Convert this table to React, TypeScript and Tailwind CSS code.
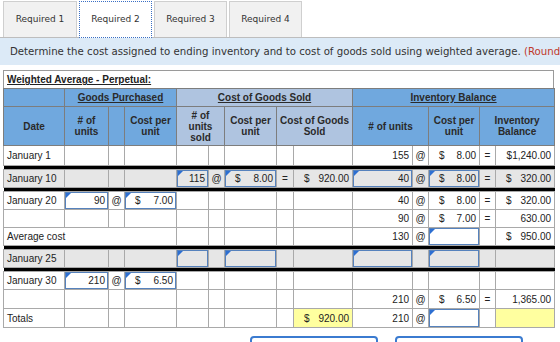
import type { ReactNode } from "react";

type Cell = {
  v?: ReactNode;
  m?: [string, string];
  a?: "l" | "r" | "c";
  inp?: boolean;
  span?: number;
  y?: boolean;
  dl?: boolean;
};

const E: Cell = {};

function Td({ c, gray }: { c: Cell; gray?: boolean }) {
  const bg = c.y ? "bg-[#ffff9f]" : gray ? "bg-[#e6e6e6]" : "bg-white";
  const align = c.a === "l" ? "text-left pl-[3px]" : c.a === "c" ? "text-center" : "text-right pr-[3px]";
  return (
    <td
      colSpan={c.span}
      className={`relative border border-[#a9a9a9] p-0 ${bg} ${c.dl ? "border-l-[#444]" : ""}`}
    >
      {c.inp && (
        <>
          <div className="absolute inset-0 border border-[#5682bd]" />
          <div className="absolute left-[1px] top-[1px] h-0 w-0 border-t-[5px] border-r-[5px] border-t-[#2d6fd2] border-r-transparent" />
        </>
      )}
      {c.m ? (
        <div className="relative flex justify-between pl-[10px] pr-[3px]">
          <span>{c.m[0]}</span>
          <span>{c.m[1]}</span>
        </div>
      ) : (
        <div className={`relative whitespace-nowrap ${align}`}>{c.v}</div>
      )}
    </td>
  );
}

function Row({ cells, gray, h }: { cells: Cell[]; gray?: boolean; h: string }) {
  return (
    <tr className={h}>
      {cells.map((c, i) => (
        <Td key={i} c={c} gray={gray} />
      ))}
    </tr>
  );
}

function Bar() {
  return (
    <tr className="h-[4px]">
      <td colSpan={14} className="h-[4px] bg-black p-0" />
    </tr>
  );
}

const at: Cell = { v: "@", a: "c" };
const eq: Cell = { v: "=", a: "c" };
const cogsEmpty: Cell[] = [{ dl: true }, E, E, E, E];
const invEmpty: Cell[] = [{ dl: true }, E, E, E, E];

const tabs = ["Required 1", "Required 2", "Required 3", "Required 4"];

export default function App() {
  return (
    <div className="h-[342px] w-[560px] overflow-hidden bg-white">
      {/* Tabs */}
      <div className="flex h-[37px] items-start gap-[2px] pl-[3px] pt-[1px]">
        {tabs.map((t, i) => (
          <div
            key={t}
            className={
              i === 1
                ? "relative z-10 flex h-[37px] w-[73px] items-center justify-center border border-dotted border-[#3a6fc4] bg-white font-['DejaVu_Sans',sans-serif] text-[9px] text-[#333]"
                : `flex h-[36px] ${i === 0 ? "w-[74px]" : "w-[73px]"} items-center justify-center border border-b-0 border-[#cfcfcf] bg-[#f1f1f1] font-['DejaVu_Sans',sans-serif] text-[9px] text-[#333]`
            }
          >
            {t}
          </div>
        ))}
      </div>

      {/* Instructions */}
      <div className="flex h-[28px] items-center overflow-hidden whitespace-nowrap border-t border-[#bdbdbd] bg-[#dceaf7] pl-[10px] font-['DejaVu_Sans',sans-serif] text-[10.2px] text-[#333]">
        Determine the cost assigned to ending inventory and to cost of goods sold using weighted average.&nbsp;
        <span className="text-[#c0392b]">(Round your answers to 2 decimal places.)</span>
      </div>

      {/* Worksheet */}
      <div className="ml-[3px] mt-[5px] w-[551px] font-['Liberation_Sans',Arial,sans-serif] text-[10px] text-[#222]">
        <div className="flex h-[18px] items-center border border-b-0 border-[#9a9a9a] pl-[3px] font-bold underline">
          Weighted Average - Perpetual:
        </div>
        <table className="w-[551px] table-fixed border-collapse">
          <colgroup>
            <col className="w-[61px]" />
            <col className="w-[44px]" />
            <col className="w-[16px]" />
            <col className="w-[52px]" />
            <col className="w-[32px]" />
            <col className="w-[16px]" />
            <col className="w-[52px]" />
            <col className="w-[17px]" />
            <col className="w-[59px]" />
            <col className="w-[60px]" />
            <col className="w-[16px]" />
            <col className="w-[51px]" />
            <col className="w-[16px]" />
            <col className="w-[59px]" />
          </colgroup>
          <thead className="font-bold text-[#2a2a2a]">
            <tr className="h-[18px]">
              <th className="border border-[#7d7d7d] bg-[#70a8de] p-0" />
              <th colSpan={3} className="border border-[#7d7d7d] bg-[#70a8de] p-0 font-bold underline">
                Goods Purchased
              </th>
              <th colSpan={5} className="border border-[#7d7d7d] bg-[#afc4e0] p-0 font-bold underline">
                Cost of Goods Sold
              </th>
              <th colSpan={5} className="border border-[#7d7d7d] bg-[#70a8de] p-0 font-bold underline">
                Inventory Balance
              </th>
            </tr>
            <tr className="h-[39px] leading-[11px]">
              <th className="border border-[#7d7d7d] bg-[#70a8de] p-0">Date</th>
              <th className="border border-[#7d7d7d] bg-[#70a8de] p-0">
                # of
                <br />
                units
              </th>
              <th className="border border-[#7d7d7d] bg-[#70a8de] p-0" />
              <th className="border border-[#7d7d7d] bg-[#70a8de] p-0">
                Cost per
                <br />
                unit
              </th>
              <th colSpan={2} className="border border-[#7d7d7d] bg-[#afc4e0] p-0">
                # of
                <br />
                units
                <br />
                sold
              </th>
              <th className="border border-[#7d7d7d] bg-[#afc4e0] p-0">
                Cost per
                <br />
                unit
              </th>
              <th colSpan={2} className="border border-[#7d7d7d] bg-[#afc4e0] p-0">
                Cost of Goods
                <br />
                Sold
              </th>
              <th colSpan={2} className="border border-[#7d7d7d] bg-[#70a8de] p-0">
                # of units
              </th>
              <th className="border border-[#7d7d7d] bg-[#70a8de] p-0">
                Cost per
                <br />
                unit
              </th>
              <th colSpan={2} className="border border-[#7d7d7d] bg-[#70a8de] p-0">
                Inventory
                <br />
                Balance
              </th>
            </tr>
          </thead>
          <tbody>
            <Row
              h="h-[20px]"
              cells={[
                { v: "January 1", a: "l" },
                E,
                E,
                E,
                ...cogsEmpty,
                { v: "155", dl: true },
                at,
                { m: ["$", "8.00"] },
                eq,
                { v: "$1,240.00" },
              ]}
            />
            <Bar />
            <Row
              gray
              h="h-[18px]"
              cells={[
                { v: "January 10", a: "l" },
                E,
                E,
                E,
                { v: "115", inp: true, dl: true },
                at,
                { m: ["$", "8.00"], inp: true },
                eq,
                { m: ["$", "920.00"] },
                { v: "40", inp: true, dl: true },
                at,
                { m: ["$", "8.00"], inp: true },
                eq,
                { m: ["$", "320.00"] },
              ]}
            />
            <Bar />
            <Row
              h="h-[18px]"
              cells={[
                { v: "January 20", a: "l" },
                { v: "90", inp: true },
                at,
                { m: ["$", "7.00"], inp: true },
                ...cogsEmpty,
                { v: "40", dl: true },
                at,
                { m: ["$", "8.00"] },
                eq,
                { m: ["$", "320.00"] },
              ]}
            />
            <Row
              h="h-[18px]"
              cells={[
                E,
                E,
                E,
                E,
                ...cogsEmpty,
                { v: "90", dl: true },
                at,
                { m: ["$", "7.00"] },
                eq,
                { v: "630.00" },
              ]}
            />
            <Row
              h="h-[18px]"
              cells={[
                { v: "Average cost", a: "l", span: 4 },
                ...cogsEmpty,
                { v: "130", dl: true },
                at,
                { inp: true },
                E,
                { m: ["$", "950.00"] },
              ]}
            />
            <Bar />
            <Row
              gray
              h="h-[18px]"
              cells={[
                { v: "January 25", a: "l" },
                E,
                E,
                E,
                { inp: true, dl: true },
                E,
                { inp: true },
                E,
                E,
                { inp: true, dl: true },
                E,
                { inp: true },
                E,
                E,
              ]}
            />
            <Bar />
            <Row
              h="h-[18px]"
              cells={[
                { v: "January 30", a: "l" },
                { v: "210", inp: true },
                at,
                { m: ["$", "6.50"], inp: true },
                ...cogsEmpty,
                ...invEmpty,
              ]}
            />
            <Row
              h="h-[19px]"
              cells={[
                E,
                E,
                E,
                E,
                ...cogsEmpty,
                { v: "210", dl: true },
                at,
                { m: ["$", "6.50"] },
                eq,
                { v: "1,365.00" },
              ]}
            />
            <Row
              h="h-[19px]"
              cells={[
                { v: "Totals", a: "l" },
                E,
                E,
                E,
                { dl: true },
                E,
                E,
                E,
                { m: ["$", "920.00"], y: true },
                { v: "210", dl: true },
                at,
                { inp: true },
                E,
                { y: true },
              ]}
            />
          </tbody>
        </table>
      </div>

      {/* Buttons */}
      <div className="mt-[8px] flex gap-[17px] pl-[250px]">
        <div className="h-[20px] w-[128px] rounded-[4px] border-2 border-[#3b7bd0]" />
        <div className="h-[20px] w-[128px] rounded-[4px] border-2 border-[#3b7bd0]" />
      </div>
    </div>
  );
}
